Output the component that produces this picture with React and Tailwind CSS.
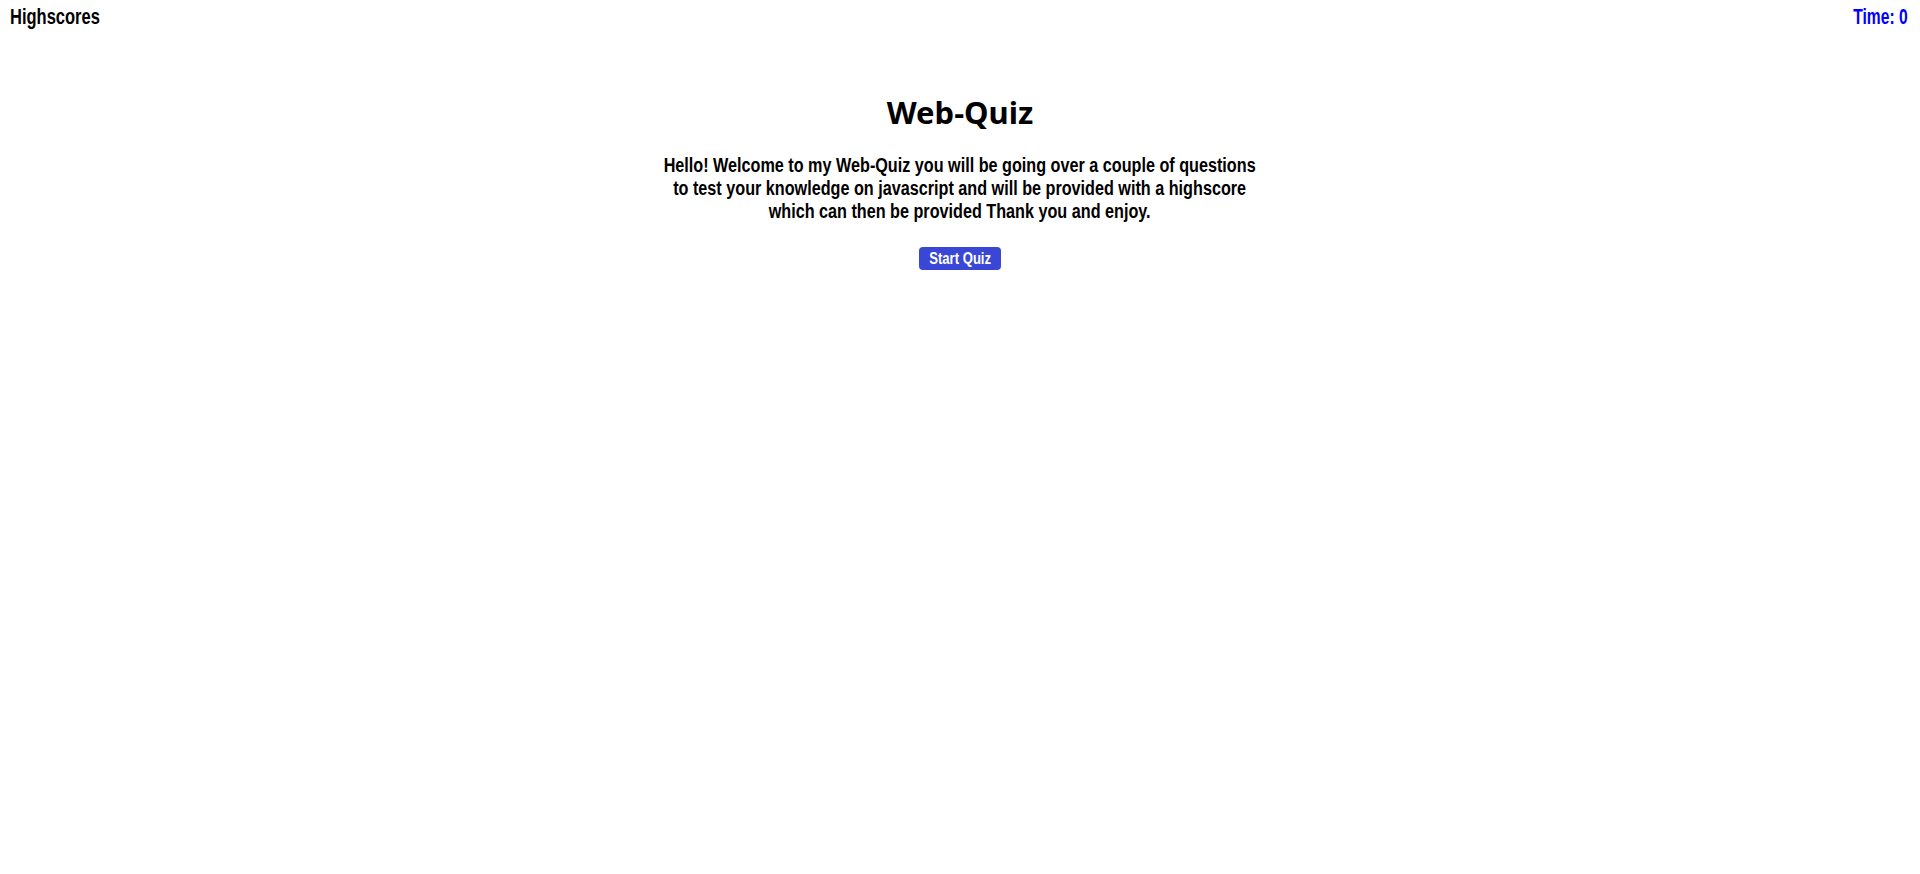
// Impact isn't installed, so the condensed headings use Liberation Sans bold squeezed on x.
const narrow = "font-['Impact','Liberation_Sans',Arial,sans-serif] font-bold";

export default function App() {
  return (
    <div className="min-h-screen w-full bg-white text-black">
      {/* Top bar */}
      <header className={`flex items-start justify-between pl-[10px] pr-[12px] pt-[5px] text-[22px] leading-[24px] ${narrow}`}>
        <span className="inline-block origin-left scale-x-[0.75]">Highscores</span>
        <span className="inline-block origin-right scale-x-[0.71] text-[#0000ff]">Time: 0</span>
      </header>

      {/* Intro */}
      <main className="flex flex-col items-center">
        <h1 className="mt-[63px] text-[31px] font-bold leading-[40px] font-['Noto_Sans','Open_Sans',sans-serif]">
          Web-Quiz
        </h1>
        <p className={`mt-[22px] scale-x-[0.83] text-center text-[19.5px] leading-[22.8px] ${narrow}`}>
          Hello! Welcome to my Web-Quiz you will be going over a couple of questions
          <br />
          to test your knowledge on javascript and will be provided with a highscore
          <br />
          which can then be provided Thank you and enjoy.
        </p>
        <button className="mt-[25px] flex h-[23px] w-[82px] items-center justify-center rounded-[4px] bg-[#3a46d6] text-white">
          <span className={`inline-block scale-x-[0.77] whitespace-nowrap text-[17px] leading-[20px] ${narrow}`}>Start Quiz</span>
        </button>
      </main>
    </div>
  );
}
